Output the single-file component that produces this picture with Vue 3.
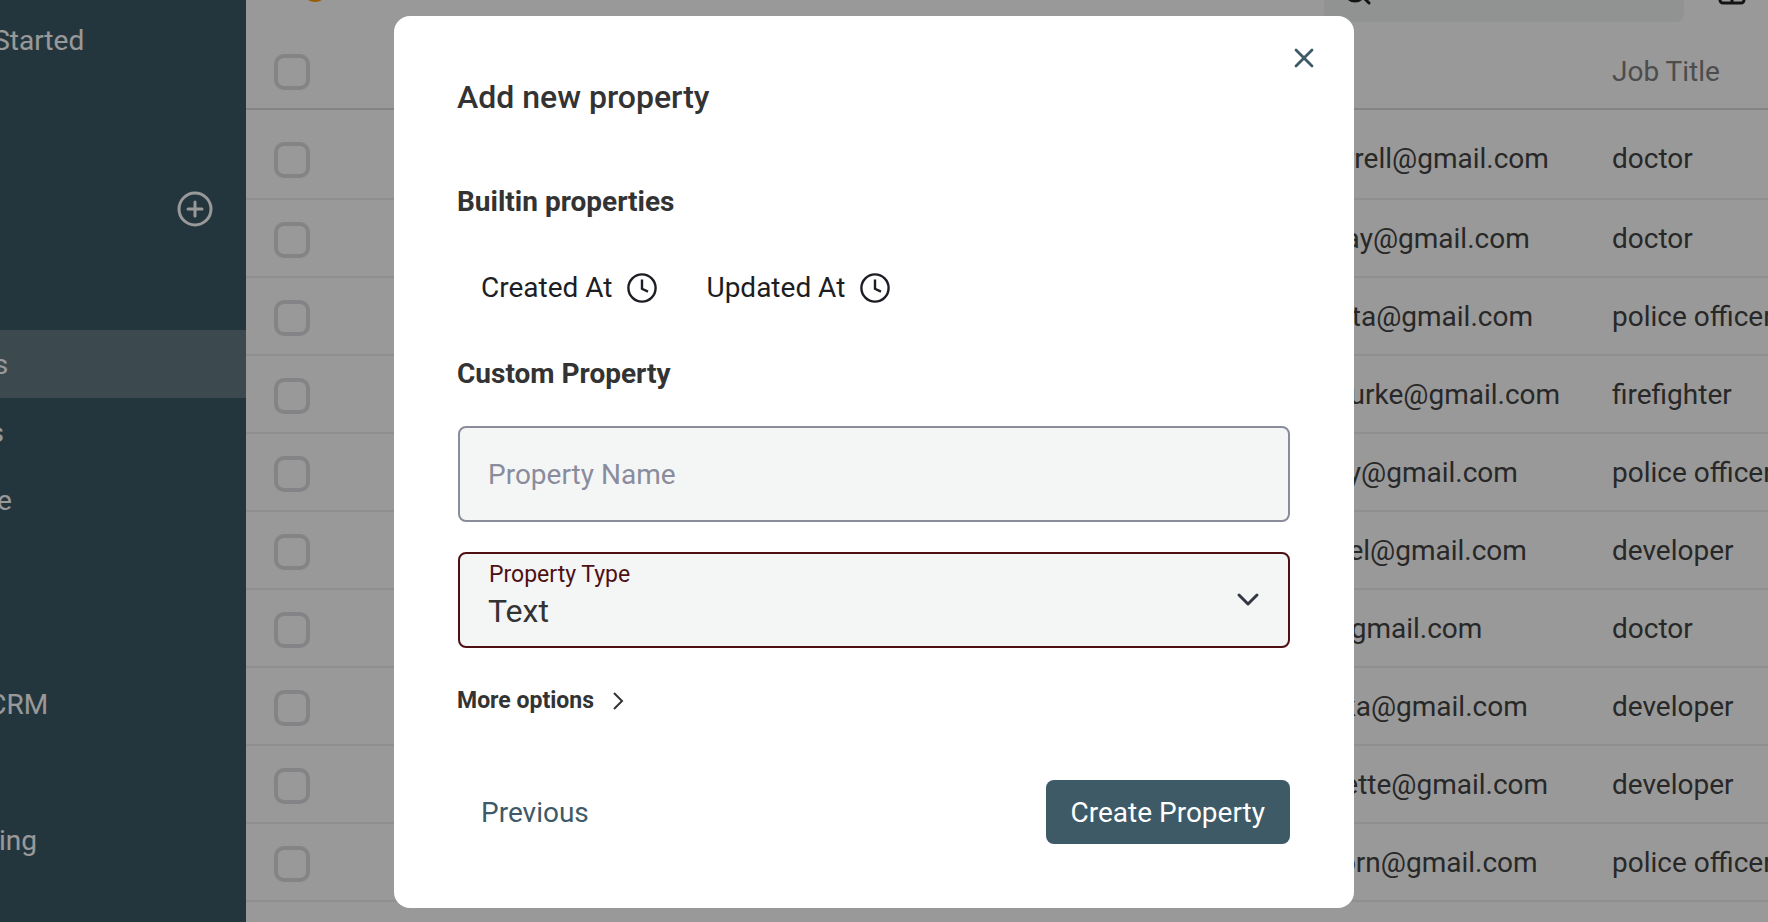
<script setup>
import { ref } from "vue";

const mainLinks = [
  { label: "Contacts", active: true },
  { label: "Sections" },
  { label: "Audience" },
];

const contacts = [
  { email: "tim.farrell@gmail.com", job: "doctor" },
  { email: "kmurray@gmail.com", job: "doctor" },
  { email: "jo.motta@gmail.com", job: "police officer" },
  { email: "anabourke@gmail.com", job: "firefighter" },
  { email: "ed.riley@gmail.com", job: "police officer" },
  { email: "p.daniel@gmail.com", job: "developer" },
  { email: "john@gmail.com", job: "doctor" },
  { email: "chruska@gmail.com", job: "developer" },
  { email: "r.burnette@gmail.com", job: "developer" },
  { email: "lisathorn@gmail.com", job: "police officer" },
];

const builtins = ["Created At", "Updated At"];
const propertyName = ref("");
const propertyType = ref("Text");
</script>

<template>
  <div class="page">
    <nav class="sidebar">
      <a href="#" class="link">Getting Started</a>
      <div class="sidebar__add">
        <button type="button" class="icon-button" aria-label="Add">
          <svg width="36" height="36" viewBox="0 0 36 36" fill="none" stroke="currentColor" stroke-width="3">
            <circle cx="18" cy="18" r="16" />
            <path d="M18 11v14M11 18h14" stroke-linecap="round" />
          </svg>
        </button>
      </div>
      <a
        v-for="link in mainLinks"
        :key="link.label"
        href="#"
        class="link"
        :class="{ active: link.active }"
      >{{ link.label }}</a>
      <a href="#" class="link link--crm">Simple CRM</a>
      <a href="#" class="link link--ads">Advertising</a>
    </nav>

    <main class="content">
      <header class="topbar">
        <span class="topbar__dot"></span>
        <label class="search">
          <svg width="28" height="28" viewBox="0 0 28 28" fill="none" stroke="currentColor" stroke-width="3" stroke-linecap="round">
            <circle cx="11" cy="13" r="10" />
            <path d="M19 19l6 6" />
          </svg>
          <input type="search" placeholder="Search" aria-label="Search" />
        </label>
        <button type="button" class="icon-button topbar__grid" aria-label="Columns">
          <svg width="28" height="28" viewBox="0 0 28 28" fill="none" stroke="currentColor" stroke-width="3">
            <rect x="2" y="2" width="24" height="24" rx="3" />
            <path d="M14 2v24M2 14h24" />
          </svg>
        </button>
      </header>

      <table class="contacts">
        <colgroup>
          <col class="col-check" />
          <col />
          <col class="col-email" />
          <col class="col-job" />
        </colgroup>
        <thead>
          <tr>
            <th><input type="checkbox" class="check" aria-label="Select all" /></th>
            <th></th>
            <th></th>
            <th>Job Title</th>
          </tr>
        </thead>
        <tbody>
          <tr v-for="contact in contacts" :key="contact.email">
            <td><input type="checkbox" class="check" :aria-label="contact.email" /></td>
            <td></td>
            <td>{{ contact.email }}</td>
            <td>{{ contact.job }}</td>
          </tr>
        </tbody>
      </table>
    </main>

    <div class="overlay">
      <section class="modal" role="dialog" aria-labelledby="modal-title">
        <button type="button" class="icon-button modal__close" aria-label="Close">
          <svg width="24" height="24" viewBox="0 0 24 24" fill="none" stroke="currentColor" stroke-width="2.8" stroke-linecap="round">
            <path d="M4 4l16 16M20 4L4 20" />
          </svg>
        </button>

        <h2 id="modal-title">Add new property</h2>

        <h3>Builtin properties</h3>
        <div class="builtins">
          <button v-for="name in builtins" :key="name" type="button" class="builtin">
            {{ name }}
            <svg width="32" height="32" viewBox="0 0 32 32" fill="none" stroke="currentColor" stroke-width="2.4">
              <circle cx="16" cy="16" r="13.6" />
              <path d="M16 7.5v9.3l6 2.8" />
            </svg>
          </button>
        </div>

        <h3>Custom Property</h3>
        <input
          v-model="propertyName"
          type="text"
          class="field"
          placeholder="Property Name"
          aria-label="Property Name"
        />
        <div class="select">
          <label for="property-type" class="select__label">Property Type</label>
          <select id="property-type" v-model="propertyType" class="field">
            <option>Text</option>
          </select>
          <svg class="select__arrow" width="24" height="16" viewBox="0 0 24 16" fill="none" stroke="currentColor" stroke-width="3" stroke-linecap="round" stroke-linejoin="round">
            <path d="M3 3l9 9 9-9" />
          </svg>
        </div>

        <button type="button" class="more">
          More options
          <svg width="12" height="20" viewBox="0 0 12 20" fill="none" stroke="currentColor" stroke-width="2">
            <path d="M2 2l8 8-8 8" />
          </svg>
        </button>

        <footer class="actions">
          <button type="button" class="btn">Previous</button>
          <button type="button" class="btn btn--primary">Create Property</button>
        </footer>
      </section>
    </div>
  </div>
</template>

<style>
body {
  overflow: hidden;
}
</style>

<style scoped>
.page {
  position: relative;
  display: flex;
  height: 100vh;
  overflow: hidden;
  background: #fff;
  color: #444;
  font-family: Roboto, sans-serif;
  font-size: 28px;
  line-height: 36px;
}

button,
input,
select {
  box-sizing: border-box;
  font: inherit;
  color: inherit;
}

button {
  border: 0;
  background: none;
  cursor: pointer;
}

svg {
  display: block;
  flex: none;
}

.icon-button {
  padding: 0;
}

/* sidebar, scrolled to its right edge */
.sidebar {
  display: flex;
  flex-direction: column;
  flex: none;
  width: 246px;
  padding-top: 6px;
  box-sizing: border-box;
  overflow: hidden;
  background: #3d5a66;
  color: #fff;
}

.link {
  height: 68px;
  line-height: 70px;
  text-indent: -104px;
  color: inherit;
  text-decoration: none;
  white-space: nowrap;
}

.link.active {
  background: #657c86;
}

.link--crm {
  margin-top: 136px;
}

.link--ads {
  margin-top: 68px;
}

.sidebar__add {
  display: flex;
  justify-content: flex-end;
  padding: 117px 33px 103px 0;
}

.content {
  flex: 1;
  min-width: 0;
  overflow: hidden;
}

.topbar {
  display: flex;
  align-items: flex-end;
  height: 22px;
  padding-left: 56px;
  overflow: hidden;
}

.topbar__dot {
  width: 26px;
  height: 26px;
  margin-bottom: 20px;
  border-radius: 50%;
  background: #f90;
}

.search {
  display: flex;
  align-items: center;
  gap: 10px;
  width: 360px;
  height: 60px;
  box-sizing: border-box;
  margin-left: auto;
  padding: 0 20px;
  border-radius: 8px;
  background: #f0f5f3;
  color: #222;
}

.search input {
  flex: 1;
  min-width: 0;
  padding: 0 0 8px;
  border: 0;
  outline: 0;
  background: none;
}

.search input::placeholder {
  color: #d8dcdb;
}

.topbar__grid {
  margin: 0 22px 17px 34px;
  color: #222;
}

.contacts {
  width: 100%;
  table-layout: fixed;
  border-collapse: separate;
  border-spacing: 0;
}

.col-check {
  width: 100px;
}

.col-email {
  width: 340px;
}

.col-job {
  width: 156px;
}

th,
td {
  box-sizing: border-box;
  height: 78px;
  padding: 2px 0 0;
  border-bottom: 2px solid #efefef;
  text-align: left;
  white-space: nowrap;
}

td:first-child {
  padding-top: 4px;
}

th {
  height: 88px;
  padding-top: 14px;
  border-color: #dcdcdc;
  color: #808080;
  font-weight: 400;
}

tbody tr:first-child td {
  height: 90px;
  padding-top: 10px;
}

tbody tr:first-child td:first-child {
  padding-top: 12px;
}

.check {
  display: block;
  width: 36px;
  height: 36px;
  margin: 0 0 0 28px;
  appearance: none;
  border: 4px solid #dcdde0;
  border-radius: 10px;
}

.overlay {
  position: absolute;
  inset: 0;
  display: flex;
  align-items: flex-start;
  justify-content: center;
  padding: 16px 20px 14px 0;
  background: rgba(0, 0, 0, 0.4);
}

.modal {
  position: relative;
  width: 960px;
  box-sizing: border-box;
  padding: 61px 64px 64px 63px;
  border-radius: 16px;
  background: #fff;
  color: #333;
}

.modal__close {
  position: absolute;
  top: 30px;
  right: 38px;
  color: #3d5a66;
}

h2,
h3 {
  margin: 0;
}

h2 {
  margin-bottom: 69px;
  font-size: 32px;
  line-height: 40px;
  font-weight: 500;
}

h3 {
  font-size: 28px;
  line-height: 32px;
  font-weight: 700;
}

.builtins {
  display: flex;
  margin: 38px 0;
}

.builtin {
  display: flex;
  align-items: center;
  gap: 14px;
  padding: 16px 24px;
  line-height: 32px;
  color: #1c1e24;
}

.field {
  display: block;
  width: calc(100% - 1px);
  height: 96px;
  margin: 36px 0 0 1px;
  padding: 0 28px;
  border: 2px solid #8a8c9c;
  border-radius: 8px;
  background: #f4f6f6;
}

.field::placeholder {
  color: #8a8c9c;
  opacity: 1;
}

.select {
  position: relative;
  margin-top: 30px;
}

.select .field {
  margin-top: 0;
  padding-top: 22px;
  appearance: none;
  border-color: #4f1014;
  font-size: 32px;
}

.select__label {
  position: absolute;
  top: 9px;
  left: 32px;
  font-size: 23px;
  line-height: 28px;
  color: #4f1014;
}

.select__arrow {
  position: absolute;
  top: 40px;
  right: 30px;
  color: #333842;
  pointer-events: none;
}

.more {
  display: flex;
  align-items: center;
  gap: 18px;
  margin: 38px 0 64px;
  padding: 0;
  font-size: 23px;
  line-height: 30px;
  font-weight: 700;
}

.actions {
  display: flex;
  justify-content: space-between;
}

.btn {
  height: 64px;
  padding: 2px 24px 0;
  border-radius: 8px;
  color: #3d5a66;
}

.btn--primary {
  padding: 2px 25px 0;
  background: #3d5a66;
  color: #fff;
}
</style>
